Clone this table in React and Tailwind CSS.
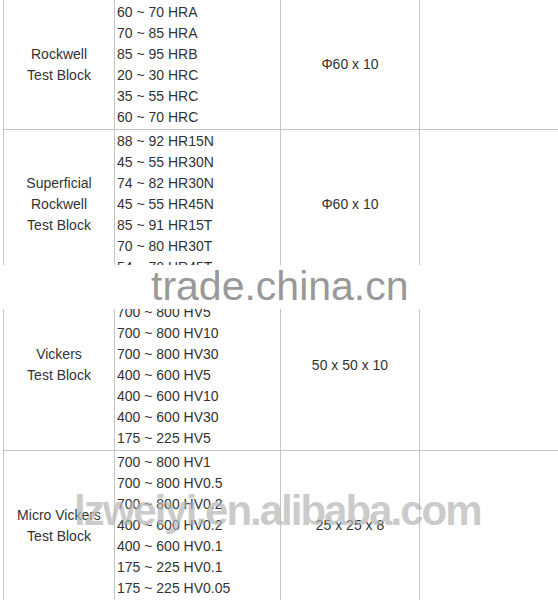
import React from 'react';

const rows = [
  {
    label: ['Rockwell', 'Test Block'],
    ranges: ['60 ~ 70 HRA', '70 ~ 85 HRA', '85 ~ 95 HRB', '20 ~ 30 HRC', '35 ~ 55 HRC', '60 ~ 70 HRC'],
    size: 'Φ60 x 10',
  },
  {
    label: ['Superficial', 'Rockwell', 'Test Block'],
    ranges: ['88 ~ 92 HR15N', '45 ~ 55 HR30N', '74 ~ 82 HR30N', '45 ~ 55 HR45N', '85 ~ 91 HR15T', '70 ~ 80 HR30T', '54 ~ 78 HR45T'],
    size: 'Φ60 x 10',
  },
  {
    label: ['Vickers', 'Test Block'],
    ranges: ['700 ~ 800 HV1', '700 ~ 800 HV5', '700 ~ 800 HV10', '700 ~ 800 HV30', '400 ~ 600 HV5', '400 ~ 600 HV10', '400 ~ 600 HV30', '175 ~ 225 HV5'],
    size: '50 x 50 x 10',
  },
  {
    label: ['Micro Vickers', 'Test Block'],
    ranges: ['700 ~ 800 HV1', '700 ~ 800 HV0.5', '700 ~ 800 HV0.2', '400 ~ 600 HV0.2', '400 ~ 600 HV0.1', '175 ~ 225 HV0.1', '175 ~ 225 HV0.05'],
    size: '25 x 25 x 8',
  },
];

export default function App() {
  return (
    <div className="relative w-[558px] h-[600px] overflow-hidden bg-white font-['Liberation_Sans',Arial,sans-serif] text-[14px] leading-[21px] text-[#333]">
      <table className="ml-[3px] -mt-px w-[555px] border-collapse table-fixed">
        <colgroup>
          <col className="w-[111px]" />
          <col className="w-[166px]" />
          <col className="w-[139px]" />
          <col className="w-[139px]" />
        </colgroup>
        <tbody>
          {rows.map((r, i) => (
            <tr key={i}>
              <td className="border border-[#c4c4c4] px-1 py-px text-center align-middle">
                {r.label.map((l) => (
                  <div key={l}>{l}</div>
                ))}
              </td>
              <td className={i === 0 ? 'border border-[#c4c4c4] pl-[2px] pt-[2px] pb-px align-middle' : 'border border-[#c4c4c4] pl-[2px] py-px align-middle'}>
                {r.ranges.map((t, j) => (
                  <div key={j}>{t}</div>
                ))}
              </td>
              <td className="border border-[#c4c4c4] text-center align-middle">{r.size}</td>
              <td className="border border-[#c4c4c4]"></td>
            </tr>
          ))}
        </tbody>
      </table>

      {/* watermark: trade.china.cn band */}
      <div className="absolute left-0 top-[265px] h-[44px] w-full bg-white"></div>
      <div className="absolute left-[151px] top-[258px] text-[41px] leading-[56px] text-[#999] whitespace-nowrap">
        trade.china.cn
      </div>

      {/* watermark: alibaba shop */}
      <div className="absolute left-[74px] top-[483px] text-[42px] leading-[56px] font-bold tracking-[-2px] text-[rgba(180,180,180,0.7)] whitespace-nowrap">
        lzweiyi.en.alibaba.com
      </div>
    </div>
  );
}
